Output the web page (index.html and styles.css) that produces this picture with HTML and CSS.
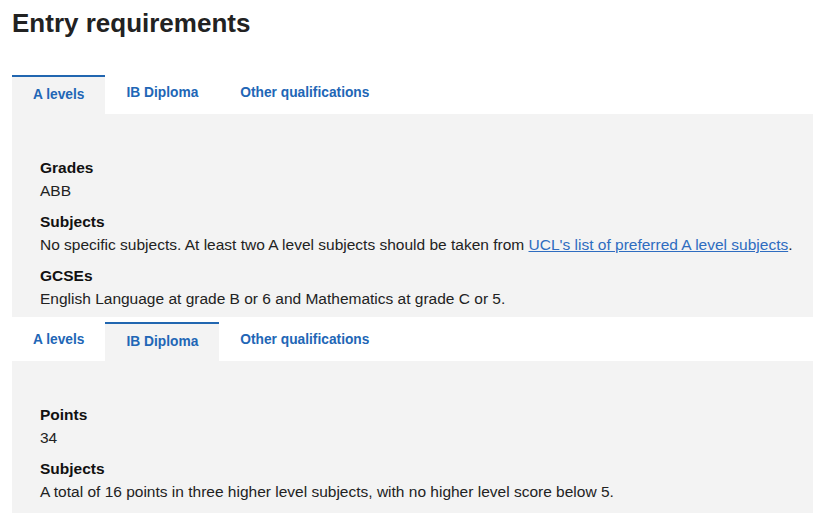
FILE: index.html
```html
<!DOCTYPE html>
<html lang="en">
<head>
<meta charset="utf-8">
<title>Entry requirements</title>
<link rel="stylesheet" href="styles.css">
</head>
<body>
<h1 class="title">Entry requirements</h1>

<section class="tabset">
  <div class="tabs">
    <span class="tab tab-active">A levels</span>
    <span class="tab">IB Diploma</span>
    <span class="tab">Other qualifications</span>
  </div>
  <div class="panel">
    <dl class="reqs">
      <div class="req">
        <dt>Grades</dt>
        <dd>ABB</dd>
      </div>
      <div class="req">
        <dt>Subjects</dt>
        <dd>No specific subjects. At least two A level subjects should be taken from <a class="link" href="#">UCL's list of preferred A level subjects</a>.</dd>
      </div>
      <div class="req">
        <dt>GCSEs</dt>
        <dd>English Language at grade B or 6 and Mathematics at grade C or 5.</dd>
      </div>
    </dl>
  </div>
</section>

<section class="tabset">
  <div class="tabs">
    <span class="tab">A levels</span>
    <span class="tab tab-active">IB Diploma</span>
    <span class="tab">Other qualifications</span>
  </div>
  <div class="panel panel-last">
    <dl class="reqs">
      <div class="req">
        <dt>Points</dt>
        <dd>34</dd>
      </div>
      <div class="req">
        <dt>Subjects</dt>
        <dd>A total of 16 points in three higher level subjects, with no higher level score below 5.</dd>
      </div>
    </dl>
  </div>
</section>
</body>
</html>
```

FILE: styles.css
```css
html, body {
  background: #ffffff;
}

body {
  margin: 0;
  padding: 8px 10px 0 12px;
  font-family: "Liberation Sans", Arial, sans-serif;
  color: #222222;
}

.title {
  margin: 0 0 37px 0;
  font-size: 26px;
  line-height: 30px;
  font-weight: bold;
  color: #222222;
}

.tabset + .tabset {
  margin-top: 5px;
}

.tabs {
  display: flex;
  align-items: flex-start;
}

.tab {
  display: block;
  padding: 9px 21px 11px 21px;
  font-size: 13.75px;
  line-height: 17px;
  font-weight: bold;
  color: #2166b6;
}

.tab-active {
  border-top: 2px solid #2166b0;
  background: #f3f3f3;
}

.panel {
  background: #f3f3f3;
  padding: 42px 8px 7px 28px;
}

.panel-last {
  padding-bottom: 10px;
}

.reqs {
  margin: 0;
  font-size: 15.5px;
  line-height: 23px;
}

.req + .req {
  margin-top: 8px;
}

.req dt {
  font-weight: bold;
  color: #111111;
}

.req dd {
  margin: 0;
  color: #222222;
}

.link {
  color: #2e6cc0;
  text-decoration: underline;
}
```
